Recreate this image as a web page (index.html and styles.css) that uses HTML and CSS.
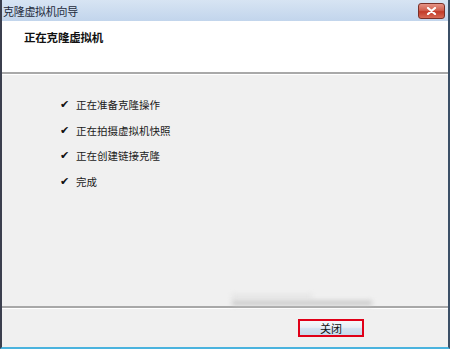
FILE: index.html
```html
<!DOCTYPE html>
<html lang="zh">
<head>
<meta charset="utf-8">
<link rel="stylesheet" href="styles.css">
</head>
<body>
<div class="window">
  <div class="titlebar">
    <span class="title">克隆虚拟机向导</span>
    <span class="close"><svg width="11" height="8" viewBox="0 0 11 8"><path d="M2 1 L9 7 M9 1 L2 7" stroke="#fff" stroke-width="2.2" stroke-linecap="round"/></svg></span>
  </div>
  <div class="header">
    <h1 class="heading">正在克隆虚拟机</h1>
  </div>
  <div class="body">
    <ul class="steps">
      <li class="step"><span class="check">✔</span>正在准备克隆操作</li>
      <li class="step"><span class="check">✔</span>正在拍摄虚拟机快照</li>
      <li class="step"><span class="check">✔</span>正在创建链接克隆</li>
      <li class="step"><span class="check">✔</span>完成</li>
    </ul>
    <div class="smudge-row">
      <span class="smudge smudge-light"></span>
      <span class="smudge"></span>
    </div>
  </div>
  <div class="footer">
    <button class="btn">关闭</button>
  </div>
</div>
</body>
</html>
```

FILE: styles.css
```css
* { box-sizing: border-box; }
html, body { margin: 0; padding: 0; }
body {
  width: 450px;
  height: 349px;
  overflow: hidden;
  font-family: "Noto Sans CJK SC", "Liberation Sans", sans-serif;
  background: #f0f0f0;
}
.window {
  width: 450px;
  height: 349px;
  display: flex;
  flex-direction: column;
  border-left: 2px solid #3b3f4e;
  border-right: 2px solid #3b4f66;
  border-bottom: 2px solid #4ab3de;
  background: #f0f0f0;
}
.titlebar {
  height: 21px;
  flex: none;
  display: flex;
  align-items: center;
  justify-content: space-between;
  padding: 0 3px 0 1px;
  background: linear-gradient(#d7e4f3, #c2d5ec);
}
.title {
  font-size: 11px;
  color: #1e2a3a;
  letter-spacing: -0.3px;
}
.close {
  width: 27px;
  height: 16px;
  display: flex;
  align-items: center;
  justify-content: center;
  border: 1px solid #7a3028;
  border-radius: 3px;
  background: linear-gradient(#e59386 0%, #d0604f 45%, #c23a28 55%, #d86a55 100%);
}
.header {
  height: 53px;
  flex: none;
  background: #fff;
  border-bottom: 2px solid #a9a9a9;
  padding: 8px 22px;
}
.heading {
  margin: 0;
  font-size: 11.5px;
  font-weight: bold;
  color: #111;
  line-height: 16px;
  letter-spacing: -0.2px;
}
.body {
  flex: 1;
  display: flex;
  flex-direction: column;
  border-top: 1px solid #fff;
  border-bottom: 2px solid #a8a8a8;
}
.steps {
  list-style: none;
  margin: 0;
  padding: 17px 0 0 58px;
}
.step {
  height: 25.5px;
  display: flex;
  align-items: center;
  font-size: 10.5px;
  color: #1a1a1a;
}
.check {
  width: 16px;
  font-size: 11px;
  font-weight: bold;
  font-family: "DejaVu Sans", sans-serif;
  color: #111;
}
.smudge-row {
  margin-top: auto;
  padding: 0 0 1px 230px;
  height: 16px;
  display: flex;
  flex-direction: column;
  justify-content: flex-end;
  gap: 4px;
}
.smudge {
  width: 140px;
  height: 4px;
  background: #c2c2c2;
  filter: blur(2.5px);
}
.smudge-light {
  width: 80px;
  height: 2px;
  background: #d8d8d8;
}
.footer {
  flex: none;
  height: 39px;
  border-top: 1px solid #fff;
  display: flex;
  justify-content: flex-start;
  align-items: flex-start;
  padding: 10px 0 0 296px;
}
.btn {
  width: 66px;
  height: 18px;
  margin: 0;
  padding: 0;
  border: 2px solid #e00018;
  background: linear-gradient(#f6f9fc 0%, #e8eef5 45%, #d3e2f1 55%, #c9daec 100%);
  font-family: "Noto Sans CJK SC", sans-serif;
  font-size: 11px;
  line-height: 14px;
  color: #111;
}
```
